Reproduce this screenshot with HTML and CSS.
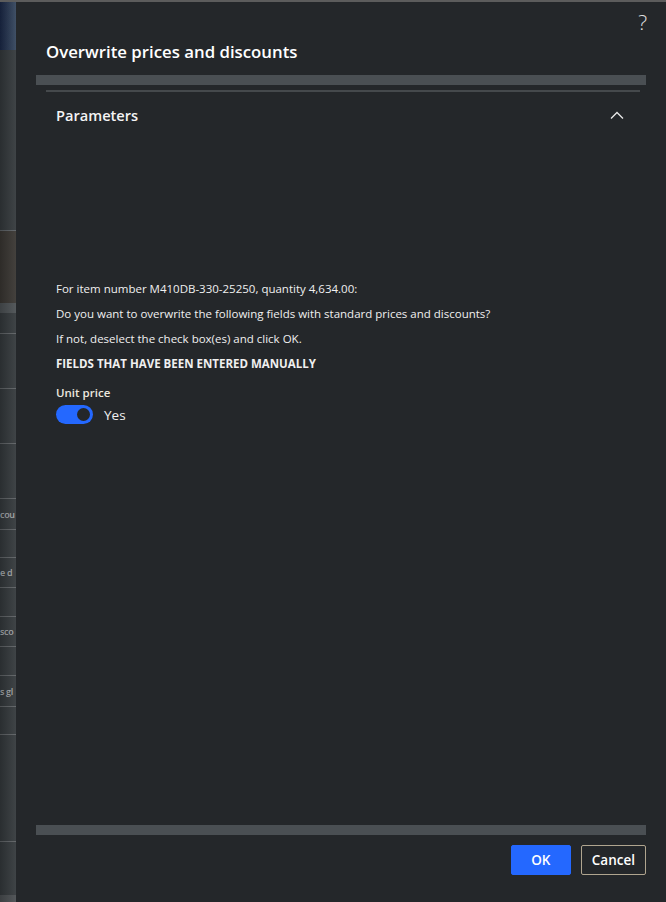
FILE: index.html
```html
<!DOCTYPE html>
<html lang="en">
<head>
  <meta charset="UTF-8">
  <meta name="viewport" content="width=device-width, initial-scale=1.0">
  <title>Overwrite prices and discounts</title>
  <link rel="stylesheet" href="styles.css">
</head>
<body>
  <div class="page">
    <!-- page behind the dialog, only a sliver shows -->
    <aside class="backdrop">
      <div class="bd-nav"></div>
      <div class="bd-block" style="height:180px"></div>
      <div class="bd-image"></div>
      <div class="bd-band"></div>
      <div class="bd-row" style="height:21px"></div>
      <div class="bd-row" style="height:55px"></div>
      <div class="bd-row" style="height:55px"></div>
      <div class="bd-row" style="height:55px"></div>
      <div class="bd-row bd-text" style="height:31px"><span>cou</span></div>
      <div class="bd-row" style="height:28px"></div>
      <div class="bd-row bd-text" style="height:30px"><span>e d</span></div>
      <div class="bd-row" style="height:29px"></div>
      <div class="bd-row bd-text" style="height:30px"><span>sco</span></div>
      <div class="bd-row" style="height:29px"></div>
      <div class="bd-row bd-text" style="height:31px"><span>s gl</span></div>
      <div class="bd-row" style="height:28px"></div>
      <div class="bd-row" style="height:107px"></div>
      <div class="bd-row bd-last"></div>
    </aside>

    <div class="dialog">
      <div class="dialog-header">
        <button class="help" type="button">?</button>
        <h1>Overwrite prices and discounts</h1>
      </div>
      <div class="scroll-bar"></div>

      <section class="fasttab">
        <div class="fasttab-header">
          <h2>Parameters</h2>
          <svg class="chevron" width="14" height="8" viewBox="0 0 14 8">
            <path d="M1 7.5 L7 1.5 L13 7.5" fill="none" stroke="#e8e8e8" stroke-width="1.3"/>
          </svg>
        </div>

        <div class="fasttab-body">
          <p>For item number M410DB-330-25250, quantity 4,634.00:</p>
          <p>Do you want to overwrite the following fields with standard prices and discounts?</p>
          <p>If not, deselect the check box(es) and click OK.</p>
          <p class="group-title">FIELDS THAT HAVE BEEN ENTERED MANUALLY</p>

          <div class="field">
            <label>Unit price</label>
            <div class="toggle-row">
              <span class="toggle"><span class="knob"></span></span>
              <span class="toggle-text">Yes</span>
            </div>
          </div>
        </div>
      </section>

      <div class="spacer"></div>
      <div class="scroll-bar"></div>

      <div class="dialog-footer">
        <button class="btn btn-primary" type="button">OK</button>
        <button class="btn" type="button">Cancel</button>
      </div>
    </div>
  </div>
</body>
</html>
```

FILE: styles.css
```css
html, body {
  height: 100%;
}
body {
  margin: 0;
  background-color: #24272a;
  font-family: 'Open Sans', 'Noto Sans', sans-serif;
  color: #f2f2f2;
}
.page {
  display: flex;
  height: 100%;
  border-top: 2px solid #5c5c5c;
  box-sizing: border-box;
  overflow: hidden;
}

/* backdrop sliver */
.backdrop {
  width: 16px;
  flex-shrink: 0;
  display: flex;
  flex-direction: column;
  background-color: #33383b;
  position: relative;
}
.backdrop::after {
  content: "";
  position: absolute;
  inset: 0;
  background: linear-gradient(to right, rgba(0, 0, 0, 0.18), rgba(255, 255, 255, 0.06));
}
.bd-nav {
  height: 48px;
  background: linear-gradient(to right, #1a2847, #34455c);
}
.bd-block {
  background-color: #33383b;
}
.bd-image {
  height: 72px;
  border-top: 1px solid #5b6064;
  background-color: #383531;
}
.bd-band {
  height: 10px;
  background-color: #4a4f52;
}
.bd-row {
  flex-shrink: 0;
  border-bottom: 1px solid #5d6164;
  box-sizing: border-box;
  display: flex;
  justify-content: flex-start;
  align-items: center;
  overflow: hidden;
}
.bd-text span {
  font-size: 9px;
  font-weight: 600;
  letter-spacing: -0.3px;
  color: #a3a7aa;
  white-space: nowrap;
}
.bd-last {
  flex: 1;
  border-bottom: 7px solid #494d50;
}

/* dialog */
.dialog {
  flex: 1;
  display: flex;
  flex-direction: column;
  min-width: 0;
}
.dialog-header {
  height: 73px;
  position: relative;
}
.dialog-header h1 {
  margin: 0;
  padding: 38px 0 0 30px;
  font-size: 16.8px;
  font-weight: 600;
  line-height: 24px;
  color: #ffffff;
}
.help {
  position: absolute;
  top: 6px;
  right: 19px;
  background: none;
  border: none;
  padding: 0;
  font-family: 'Open Sans', sans-serif;
  font-size: 21px;
  font-weight: 300;
  color: #e0e0e0;
}
.scroll-bar {
  height: 10px;
  margin: 0 20px;
  background-color: #4a4f53;
}

.fasttab {
  margin: 5px 26px 0 30px;
  border-top: 2px solid #45494c;
}
.fasttab-header {
  height: 45px;
  display: flex;
  align-items: center;
  justify-content: space-between;
  padding: 0 16px 0 10px;
}
.fasttab-header h2 {
  margin: 0;
  font-size: 14.6px;
  font-weight: 600;
  color: #f4f4f4;
}
.fasttab-body {
  padding: 139px 10px 0;
}
.fasttab-body p {
  margin: 0;
  font-size: 11.5px;
  line-height: 25px;
  color: #f0f0f0;
}
.fasttab-body .group-title {
  font-weight: 700;
}
.field {
  margin-top: 7px;
}
.field label {
  display: block;
  font-size: 11.5px;
  font-weight: 600;
  line-height: 20px;
  color: #ece8df;
}
.toggle-row {
  display: flex;
  align-items: center;
  gap: 11px;
  margin-top: 2px;
}
.toggle {
  width: 37px;
  height: 19px;
  border-radius: 10px;
  background-color: #2468ff;
  display: flex;
  align-items: center;
  justify-content: flex-end;
  padding-right: 3px;
  box-sizing: border-box;
}
.knob {
  width: 13px;
  height: 13px;
  border-radius: 50%;
  background-color: #24272a;
}
.toggle-text {
  font-size: 13.5px;
  color: #f0f0f0;
}

.spacer {
  flex: 1;
}
.dialog-footer {
  display: flex;
  justify-content: flex-end;
  gap: 10px;
  padding: 10px 20px 27px;
}
.btn {
  height: 30px;
  padding: 0 10px;
  font-family: 'Open Sans', sans-serif;
  font-size: 13.5px;
  font-weight: 600;
  color: #ffffff;
  background-color: #24272a;
  border: 1px solid #b0a58f;
  border-radius: 2px;
}
.btn-primary {
  width: 60px;
  background-color: #2468ff;
  border-color: #2468ff;
}
```
